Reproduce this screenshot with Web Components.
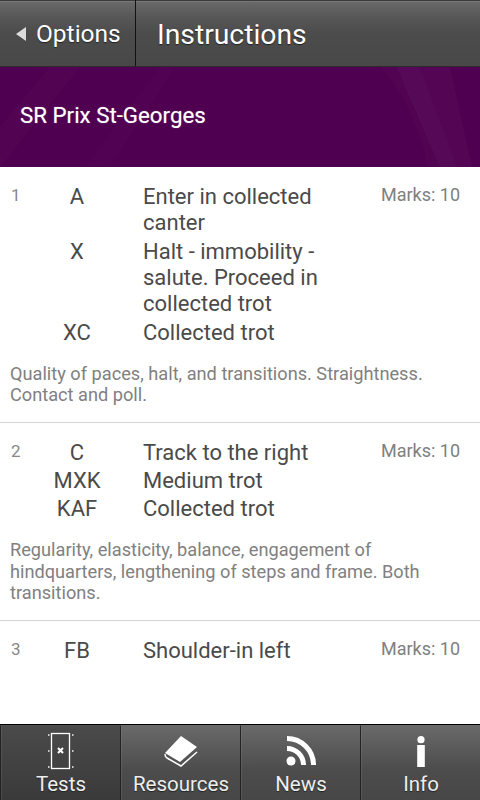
<!DOCTYPE html>
<html>
<head>
<meta charset="utf-8">
<title>Instructions</title>
<style>
  html, body { margin: 0; height: 100%; }
  body { font-family: Roboto, "Liberation Sans", sans-serif; background: #fff; overflow: hidden; }
  #app { display: flex; flex-direction: column; height: 800px; }
</style>
</head>
<body>
<div id="app">
  <app-header back="Options" title="Instructions"></app-header>
  <test-banner>SR Prix St-Georges</test-banner>
  <step-list>
    <test-step num="1" marks="10" gap="3px" notes="Quality of paces, halt, and transitions. Straightness. Contact and poll.">
      <step-move at="A">Enter in collected canter</step-move>
      <step-move at="X">Halt - immobility - salute. Proceed in collected trot</step-move>
      <step-move at="XC">Collected trot</step-move>
    </test-step>
    <test-step num="2" marks="10" notes="Regularity, elasticity, balance, engagement of hindquarters, lengthening of steps and frame. Both transitions.">
      <step-move at="C">Track to the right</step-move>
      <step-move at="MXK">Medium trot</step-move>
      <step-move at="KAF">Collected trot</step-move>
    </test-step>
    <test-step num="3" marks="10" last>
      <step-move at="FB">Shoulder-in left</step-move>
    </test-step>
  </step-list>
  <tab-bar>
    <tab-item label="Tests" icon="arena" active></tab-item>
    <tab-item label="Resources" icon="book"></tab-item>
    <tab-item label="News" icon="rss"></tab-item>
    <tab-item label="Info" icon="info"></tab-item>
  </tab-bar>
</div>

<script>
class AppHeader extends HTMLElement {
  connectedCallback() {
    this.attachShadow({ mode: "open" });
    this.shadowRoot.innerHTML = `
      <style>
        :host { display: flex; height: 67px; flex: none; background: #111; box-sizing: border-box; border-bottom: 1px solid #2c2c2c; }
        .cell { display: flex; align-items: center; box-sizing: border-box; background: linear-gradient(#6a6a6a 0, #575757 16px, #4c4c4c 32px, #484848 100%); border-top: 1px solid #3a3a3a; box-shadow: inset 0 1px 0 #777; color: #fff; text-shadow: 0 1px 1px #222; }
        .back { width: 135px; padding-left: 16px; gap: 10px; font-size: 24.5px; }
        .back i { width: 0; height: 0; border: 7.5px solid transparent; border-left: 0; border-right: 10px solid #ddd; }
        .title { flex: 1; padding: 2px 0 0 21px; font-size: 28.3px; margin-left: 1px; }
      </style>
      <div class="cell back"><i></i><span>${this.getAttribute("back")}</span></div>
      <div class="cell title">${this.getAttribute("title")}</div>
    `;
  }
}
customElements.define("app-header", AppHeader);

class TestBanner extends HTMLElement {
  connectedCallback() {
    this.attachShadow({ mode: "open" });
    this.shadowRoot.innerHTML = `
      <style>
        :host { display: flex; align-items: center; position: relative; height: 100px; flex: none; box-sizing: border-box; padding: 0 0 4px 20px; background: #500051; color: #fff; font-size: 22.3px; overflow: hidden; text-shadow: 0 0 1px rgba(255,255,255,.5); }
        svg { position: absolute; left: 0; top: 0; }
        span { position: relative; }
      </style>
      <svg width="480" height="100" viewBox="0 0 480 100">
        <path d="M380 0C402 22 420 60 428 100L440 100C425 60 412 30 397 0Z" fill="#fff" opacity=".015"/>
        <path d="M397 0L440 100L457 100L420 0Z" fill="#fff" opacity=".035"/>
        <path d="M420 0L457 100L472 100L450 0Z" fill="#fff" opacity=".025"/>
        <path d="M50 0L0 60L0 100L80 0Z" fill="#fff" opacity=".015"/>
        <path d="M160 0L85 100L110 100L175 0Z" fill="#fff" opacity=".008"/>
      </svg>
      <span><slot></slot></span>
    `;
  }
}
customElements.define("test-banner", TestBanner);

class StepList extends HTMLElement {
  connectedCallback() {
    this.attachShadow({ mode: "open" });
    this.shadowRoot.innerHTML = `
      <style>
        :host { display: block; flex: 1; min-height: 0; overflow: hidden; background: #fff; }
      </style>
      <slot></slot>
    `;
  }
}
customElements.define("step-list", StepList);

class TestStep extends HTMLElement {
  connectedCallback() {
    const notes = this.getAttribute("notes");
    const gap = this.getAttribute("gap") || "2px";
    this.attachShadow({ mode: "open" });
    this.shadowRoot.innerHTML = `
      <style>
        :host { display: block; box-sizing: border-box; padding: 17px 0 16.4px; border-bottom: 1px solid #d4d4d4; }
        :host([last]) { border-bottom: 0; }
        .top { display: flex; }
        .num { width: 10px; padding-left: 11px; font-size: 17px; line-height: 22px; color: #888; flex: none; }
        .moves { flex: 1; display: flex; flex-direction: column; gap: ${gap}; }
        .marks { flex: none; width: 100px; padding-right: 20px; text-align: right; font-size: 18px; line-height: 22px; color: #808080; }
        .notes { margin: 17px 40px 0 10px; font-size: 18.2px; line-height: 21.4px; color: #808080; }
      </style>
      <div class="top">
        <div class="num">${this.getAttribute("num")}</div>
        <div class="moves"><slot></slot></div>
        <div class="marks">Marks: ${this.getAttribute("marks")}</div>
      </div>
      ${notes ? `<div class="notes">${notes}</div>` : ""}
    `;
  }
}
customElements.define("test-step", TestStep);

class StepMove extends HTMLElement {
  connectedCallback() {
    this.attachShadow({ mode: "open" });
    this.shadowRoot.innerHTML = `
      <style>
        :host { display: flex; font-size: 22px; line-height: 26px; color: #4a4a4a; }
        .at { width: 92px; margin-left: 10px; text-align: center; flex: none; }
        .txt { flex: 1; padding-left: 20px; }
      </style>
      <div class="at">${this.getAttribute("at")}</div>
      <div class="txt"><slot></slot></div>
    `;
  }
}
customElements.define("step-move", StepMove);

class TabBar extends HTMLElement {
  connectedCallback() {
    this.attachShadow({ mode: "open" });
    this.shadowRoot.innerHTML = `
      <style>
        :host { display: grid; grid-template-columns: repeat(4, 120px); height: 76px; flex: none; box-sizing: border-box; border-top: 1px solid #000; background: #000; }
      </style>
      <slot></slot>
    `;
  }
}
customElements.define("tab-bar", TabBar);

const TAB_ICONS = {
  arena: `<svg width="28" height="38" viewBox="0 0 28 38"><rect x="4.5" y="1.5" width="18" height="35" fill="none" stroke="#fff" stroke-width="1.3"/><path d="M11 16l5 5m0-5l-5 5" stroke="#fff" stroke-width="2"/><g fill="#ccc"><rect x="1" y="2" width="1.5" height="2"/><rect x="25" y="2" width="1.5" height="2"/><rect x="1" y="18" width="1.5" height="2"/><rect x="25" y="18" width="1.5" height="2"/><rect x="1" y="34" width="1.5" height="2"/><rect x="25" y="34" width="1.5" height="2"/></g></svg>`,
  book: `<svg width="34" height="32" viewBox="0 0 34 32"><path d="M1 18L17 1l16 11-17 15z" fill="#fff"/><path d="M1 19c0 2 .5 3 2 4l14 8 16-14" fill="none" stroke="#fff" stroke-width="1.5"/></svg>`,
  rss: `<svg width="30" height="30" viewBox="0 0 30 30"><circle cx="5" cy="25" r="4.5" fill="#fff"/><path d="M1 12.5a16.5 16.5 0 0 1 16.5 16.5" fill="none" stroke="#fff" stroke-width="5"/><path d="M1 2.5a26.5 26.5 0 0 1 26.5 26.5" fill="none" stroke="#fff" stroke-width="5"/></svg>`,
  info: `<svg width="10" height="31" viewBox="0 0 10 31"><circle cx="5" cy="3.7" r="3.6" fill="#fff"/><rect x="1.2" y="9" width="7.6" height="22" fill="#fff"/></svg>`,
};

class TabItem extends HTMLElement {
  connectedCallback() {
    this.attachShadow({ mode: "open" });
    this.shadowRoot.innerHTML = `
      <style>
        :host { display: flex; flex-direction: column; align-items: center; box-sizing: border-box; border-left: 1px solid #222; border-top: 1px solid #6a6a6a; background: linear-gradient(#696969, #4c4c4c 60%, #474747); color: #fff; text-shadow: 0 1px 1px #222; box-shadow: inset 1px 0 0 rgba(255,255,255,.08); }
        :host([active]) { background: linear-gradient(#4a4a4a, #3a3a3a); border-top-color: #4f4f4f; }
        .icon { height: 38px; margin-top: 6px; display: flex; align-items: center; justify-content: center; }
        .label { font-size: 20.5px; line-height: 24px; margin: 2px 0 0 1px; color: #eee; }
      </style>
      <div class="icon">${TAB_ICONS[this.getAttribute("icon")]}</div>
      <div class="label">${this.getAttribute("label")}</div>
    `;
  }
}
customElements.define("tab-item", TabItem);
</script>
</body>
</html>
